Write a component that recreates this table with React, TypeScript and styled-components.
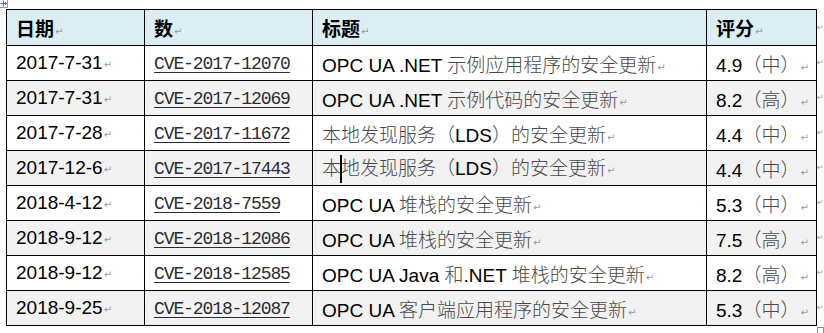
import React from 'react';
import styled, { createGlobalStyle } from 'styled-components';

const GlobalStyle = createGlobalStyle`
  html, body {
    margin: 0;
    padding: 0;
    background: #fff;
  }
  body {
    font-family: "Liberation Sans", "Noto Sans CJK SC", sans-serif;
  }
`;

const Page = styled.div`
  position: relative;
  width: 824px;
  height: 333px;
  padding: 9px 0 0 6px;
  box-sizing: border-box;
  overflow: hidden;
`;

const MoveHandle = styled.div`
  position: absolute;
  left: 0;
  top: 0;
  width: 7px;
  height: 7px;
  border: 1px solid #9a9a9a;
  border-left: none;
  border-top: none;
  background: #fff;
  display: flex;
  align-items: center;
  justify-content: center;
`;

const ResizeHandle = styled.div`
  position: absolute;
  left: 817px;
  top: 327px;
  width: 5px;
  height: 5px;
  border: 1px solid #8a8a8a;
  background: #fff;
`;

const Table = styled.table`
  border-collapse: collapse;
  table-layout: fixed;
  width: 817px;
`;

const Row = styled.tr<{ $shade: 'head' | 'gray' | 'white' }>`
  height: ${(p) => (p.$shade === 'head' ? 36 : 35)}px;
  background: ${(p) =>
    p.$shade === 'head' ? '#dbeef4' : p.$shade === 'gray' ? '#f2f2f2' : '#ffffff'};
`;

const Cell = styled.td<{ $head?: boolean }>`
  border: 1px solid #000;
  padding: 0 0 0 9px;
  vertical-align: middle;
  font-size: 19px;
  color: #000;
  white-space: nowrap;
  overflow: visible;
  font-weight: ${(p) => (p.$head ? 700 : 400)};
`;

const EndCell = styled.td`
  border: none;
  background: #fff;
  padding: 0;
  vertical-align: middle;
  white-space: nowrap;
  font-size: 9px;
`;

const Cve = styled.span`
  font-family: "Liberation Mono", monospace;
  font-size: 18px;
  letter-spacing: -1.1px;
  color: #2b2b33;
  text-decoration: underline;
  text-underline-offset: 3px;
  text-decoration-thickness: 1px;
`;

const Cjk = styled.span<{ $head?: boolean }>`
  font-family: "Noto Sans CJK SC", sans-serif;
  color: ${(p) => (p.$head ? '#000' : '#4a4a4a')};
  font-weight: ${(p) => (p.$head ? 700 : 300)};
`;

const Mark = styled.span<{ $small?: boolean }>`
  font-family: "DejaVu Sans", sans-serif;
  font-size: ${(p) => (p.$small ? 8 : 10)}px;
  font-weight: 400;
  color: #9a9a9a;
  margin-left: ${(p) => (p.$small ? 0 : 1)}px;
  vertical-align: 1px;
`;

const Caret = styled.span`
  display: inline-block;
  width: 2px;
  height: 28px;
  margin: 0 -1px;
  background: #000;
  vertical-align: middle;
`;

const cols = [138, 168, 394, 110, 7];

type Item = { date: string; cve: string; title: string; score: string };

const rows: Item[] = [
  { date: '2017-7-31', cve: 'CVE-2017-12070', title: 'OPC UA .NET 示例应用程序的安全更新', score: '4.9（中）' },
  { date: '2017-7-31', cve: 'CVE-2017-12069', title: 'OPC UA .NET 示例代码的安全更新', score: '8.2（高）' },
  { date: '2017-7-28', cve: 'CVE-2017-11672', title: '本地发现服务（LDS）的安全更新', score: '4.4（中）' },
  { date: '2017-12-6', cve: 'CVE-2017-17443', title: '本|地发现服务（LDS）的安全更新', score: '4.4（中）' },
  { date: '2018-4-12', cve: 'CVE-2018-7559', title: 'OPC UA 堆栈的安全更新', score: '5.3（中）' },
  { date: '2018-9-12', cve: 'CVE-2018-12086', title: 'OPC UA 堆栈的安全更新', score: '7.5（高）' },
  { date: '2018-9-12', cve: 'CVE-2018-12585', title: 'OPC UA Java 和.NET 堆栈的安全更新', score: '8.2（高）' },
  { date: '2018-9-25', cve: 'CVE-2018-12087', title: 'OPC UA 客户端应用程序的安全更新', score: '5.3（中）' },
];

// split latin / CJK runs so the CJK part gets its own font; "|" marks the text caret
const Mixed = ({ text, head }: { text: string; head?: boolean }) => {
  const parts = text.split(/([\u3000-\u9fff\uff00-\uffef|]+)/).filter((s) => s !== '');
  return (
    <>
      {parts.map((part, i) => {
        if (/[\u3000-\u9fff\uff00-\uffef|]/.test(part)) {
          const bits = part.split('|');
          return (
            <Cjk key={i} $head={head}>
              {bits.map((b, j) => (
                <React.Fragment key={j}>
                  {j > 0 && <Caret />}
                  {b}
                </React.Fragment>
              ))}
            </Cjk>
          );
        }
        return <span key={i}>{part}</span>;
      })}
    </>
  );
};

const Para = () => <Mark>↵</Mark>;

const App = () => {
  return (
    <Page>
      <GlobalStyle />
      <MoveHandle>
        <svg width="7" height="7" viewBox="0 0 7 7">
          <path d="M0.5 3.5h6M3.5 0.5v6" stroke="#3a6fd0" strokeWidth="1" />
          <path d="M5 2.2l1.5 1.3L5 4.8" fill="none" stroke="#3a6fd0" strokeWidth="1" />
        </svg>
      </MoveHandle>
      <Table>
        <colgroup>
          {cols.map((w, i) => (
            <col key={i} style={{ width: w }} />
          ))}
        </colgroup>
        <tbody>
          <Row $shade="head">
            <Cell $head><Mixed text="日期" head /><Para /></Cell>
            <Cell $head><Mixed text="数" head /><Para /></Cell>
            <Cell $head><Mixed text="标题" head /><Para /></Cell>
            <Cell $head><Mixed text="评分" head /><Para /></Cell>
            <EndCell><Mark $small>↵</Mark></EndCell>
          </Row>
          {rows.map((r, i) => (
            <Row key={i} $shade={i % 2 === 1 ? 'gray' : 'white'}>
              <Cell>{r.date}<Para /></Cell>
              <Cell><Cve>{r.cve}</Cve></Cell>
              <Cell><Mixed text={r.title} /><Para /></Cell>
              <Cell><Mixed text={r.score} /><Para /></Cell>
              <EndCell><Mark $small>↵</Mark></EndCell>
            </Row>
          ))}
        </tbody>
      </Table>
      <ResizeHandle />
    </Page>
  );
};

export default App;
